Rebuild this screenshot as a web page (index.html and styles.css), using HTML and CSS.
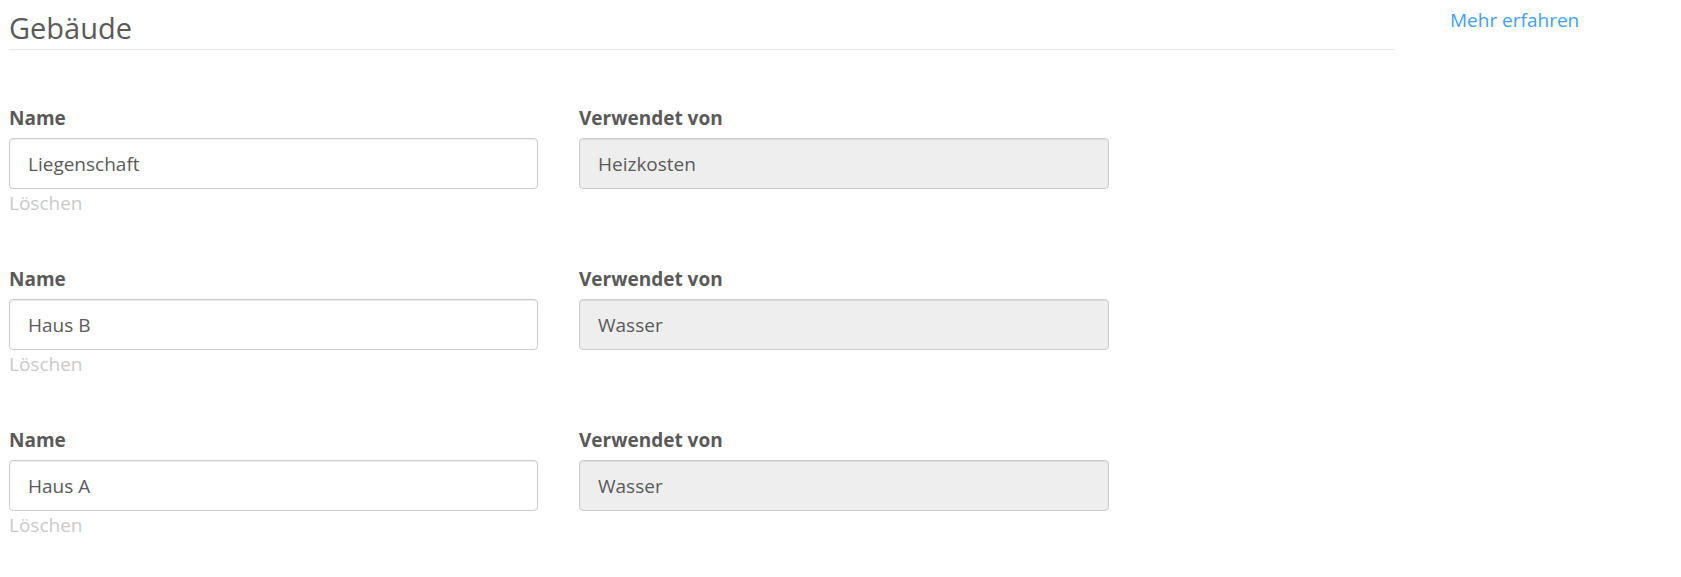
FILE: index.html
```html
<!DOCTYPE html>
<html lang="de">
<head>
<meta charset="utf-8">
<title>Gebäude</title>
<link rel="stylesheet" href="styles.css">
</head>
<body>
<div class="page">
  <main class="main">
    <h1 class="title">Gebäude</h1>
    <section class="row">
      <div class="field">
        <label class="label">Name</label>
        <div class="input">Liegenschaft</div>
        <a class="delete">Löschen</a>
      </div>
      <div class="field">
        <label class="label">Verwendet von</label>
        <div class="input readonly">Heizkosten</div>
      </div>
    </section>
    <section class="row">
      <div class="field">
        <label class="label">Name</label>
        <div class="input">Haus B</div>
        <a class="delete">Löschen</a>
      </div>
      <div class="field">
        <label class="label">Verwendet von</label>
        <div class="input readonly">Wasser</div>
      </div>
    </section>
    <section class="row">
      <div class="field">
        <label class="label">Name</label>
        <div class="input">Haus A</div>
        <a class="delete">Löschen</a>
      </div>
      <div class="field">
        <label class="label">Verwendet von</label>
        <div class="input readonly">Wasser</div>
      </div>
    </section>
  </main>
  <aside class="side">
    <a class="more" href="#">Mehr erfahren</a>
  </aside>
</div>
</body>
</html>
```

FILE: styles.css
```css
html, body {
  margin: 0;
  padding: 0;
  background: #fff;
}
body {
  font-family: "Open Sans", "Noto Sans", "Liberation Sans", sans-serif;
  color: #555;
}
.page {
  display: flex;
  padding: 8px 0 0 9px;
}
.main {
  width: 1385px;
  flex: none;
}
.title {
  margin: 0;
  font-size: 29px;
  font-weight: 400;
  line-height: 40px;
  padding-bottom: 1px;
  border-bottom: 1px solid #e5e5e5;
  color: #5a5a5a;
}
.row {
  display: grid;
  grid-template-columns: 529px 530px;
  column-gap: 41px;
  margin-top: 55px;
}
.row + .row {
  margin-top: 50px;
}
.field {
  display: flex;
  flex-direction: column;
}
.label {
  font-size: 19px;
  font-weight: 700;
  line-height: 26px;
  margin-bottom: 7px;
  color: #595959;
}
.input {
  box-sizing: border-box;
  height: 51px;
  border: 1px solid #ccc;
  border-radius: 4px;
  padding: 13px 18px 11px;
  font-size: 19px;
  line-height: 25px;
  color: #5a5a5a;
  background: #fff;
  box-shadow: inset 0 1px 1px rgba(0,0,0,0.075);
}
.input.readonly {
  background: #eee;
}
.delete {
  margin-top: 2px;
  font-size: 19px;
  line-height: 25px;
  color: #c9c9c9;
  align-self: flex-start;
}
.side {
  margin-left: 56px;
}
.more {
  display: block;
  font-size: 19px;
  line-height: 25px;
  color: #42a0f2;
  text-decoration: none;
}
```
